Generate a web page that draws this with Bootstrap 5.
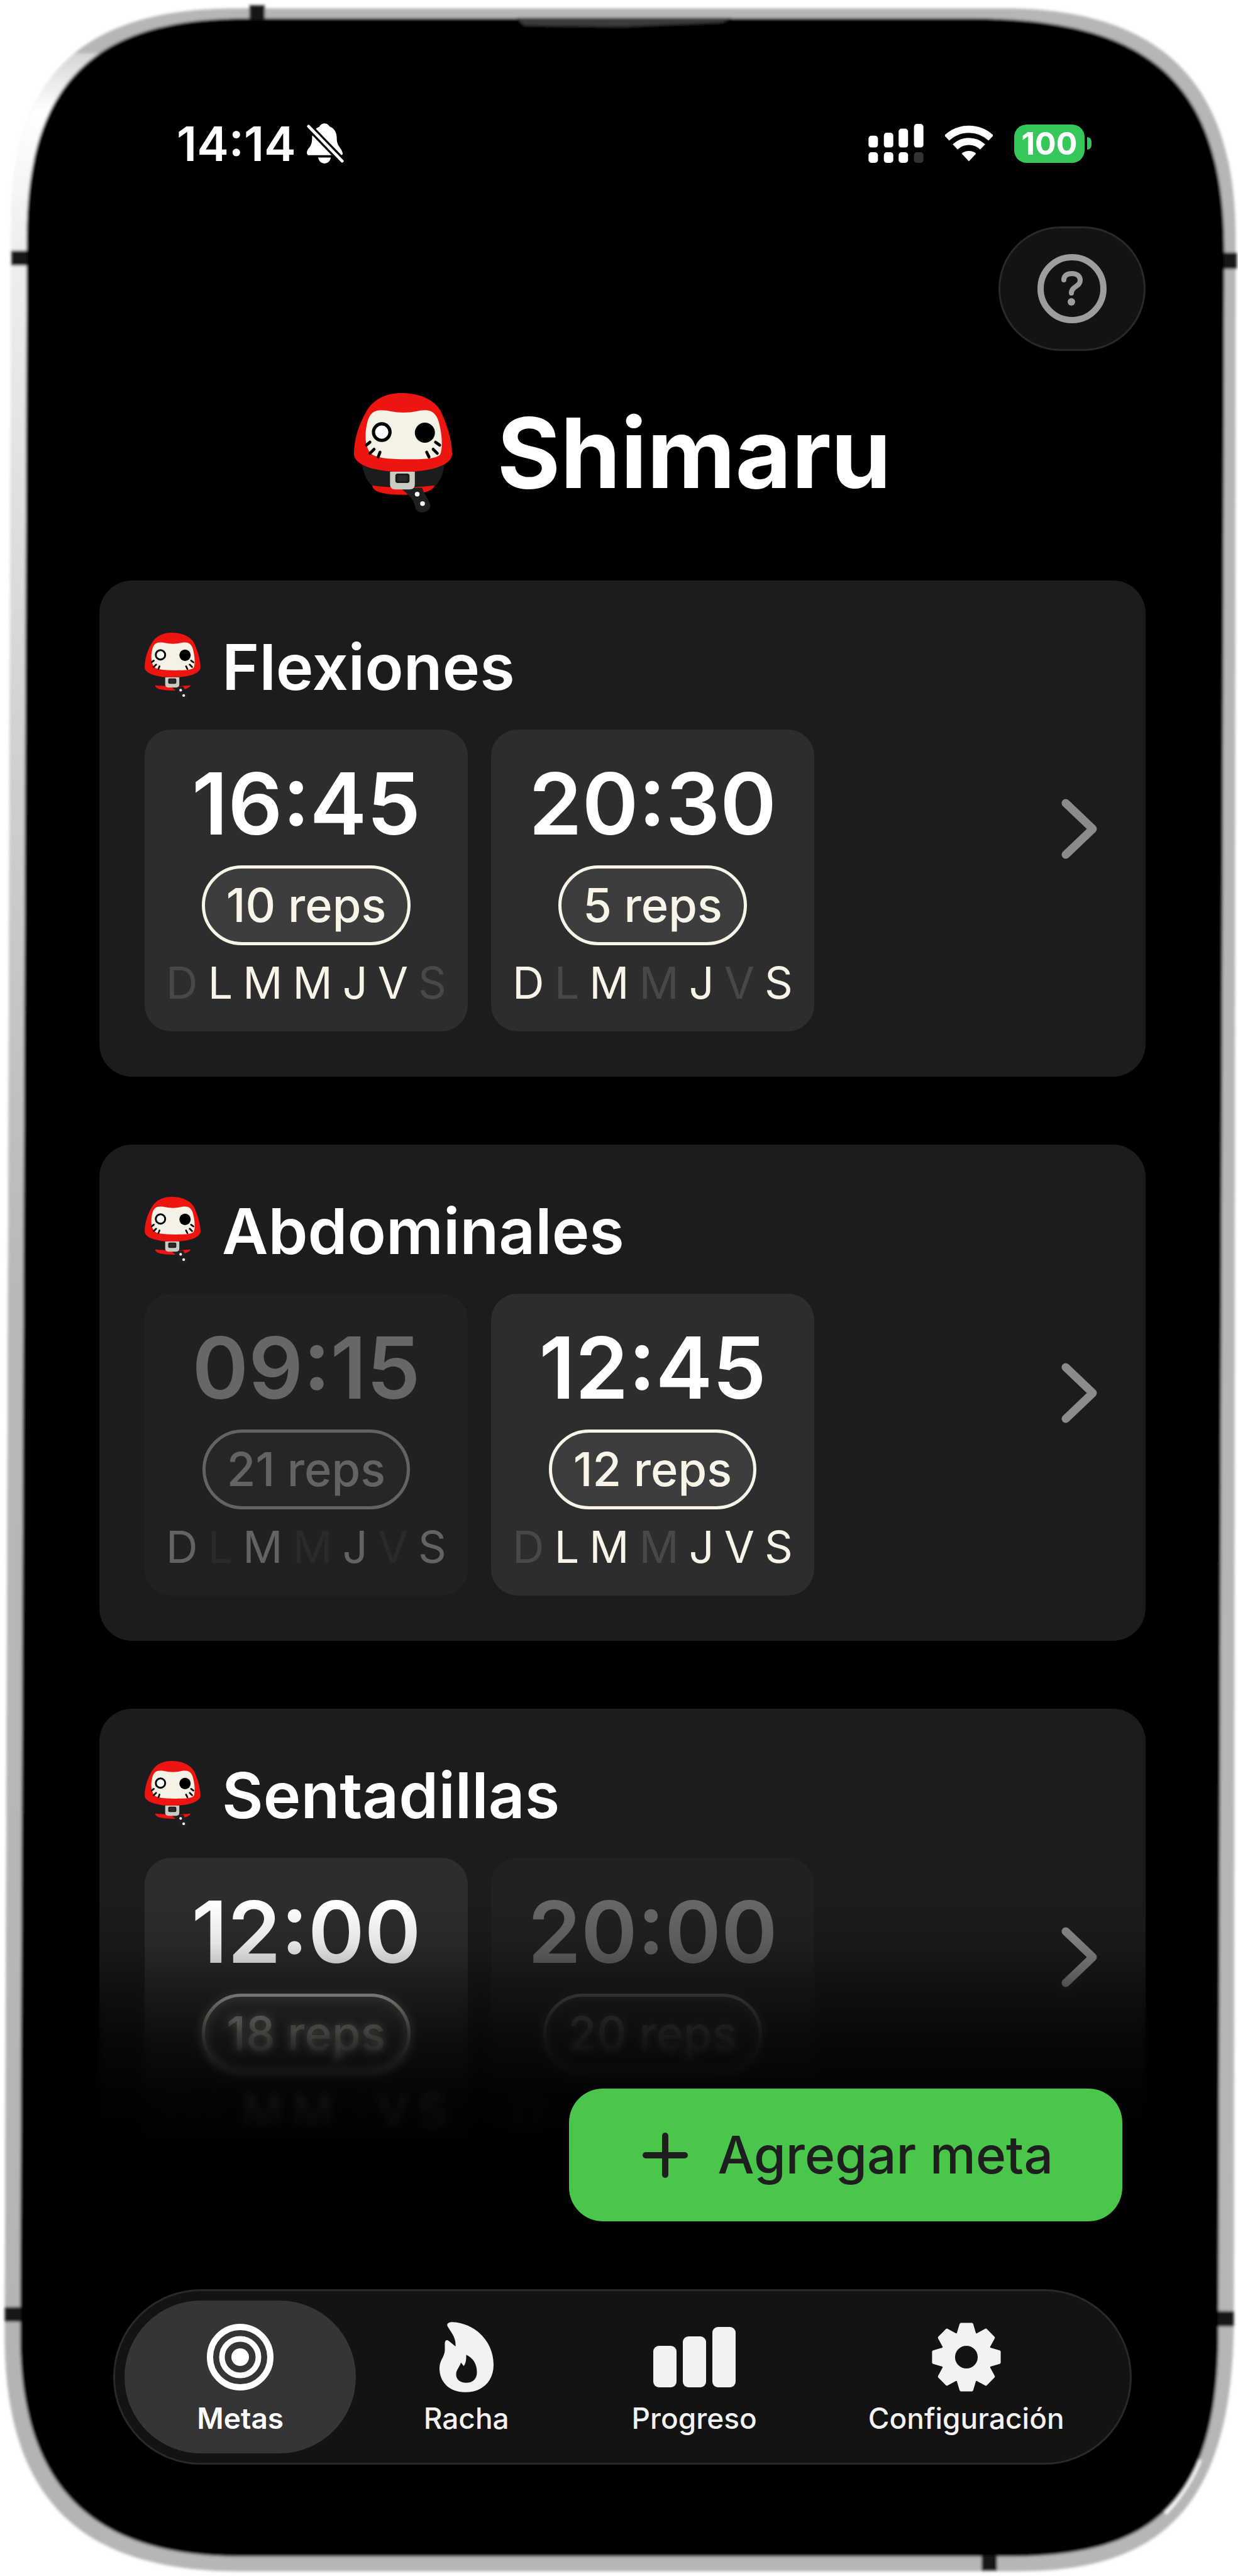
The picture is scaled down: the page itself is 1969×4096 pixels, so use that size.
<!DOCTYPE html>
<html lang="es">
<head>
  <meta charset="utf-8">
  <meta name="viewport" content="width=device-width, initial-scale=1">
  <title>Shimaru</title>
  <link href="https://cdn.jsdelivr.net/npm/bootstrap@5.3.3/dist/css/bootstrap.min.css" rel="stylesheet">
  <style>
    body {
      font-family: Inter, "Liberation Sans", sans-serif;
      background-color: #fff;
      color: #fff;
    }
    .phone-screen {
      padding: 180px 147px 176px 158px;
    }
    /* Status bar */
    .status-bar {
      height: 96px;
      padding: 0 86px 0 123px;
      font-size: 76px;
      line-height: 96px;
      font-weight: 600;
    }
    .wifi {
      margin: 0 34px;
    }
    .battery-level {
      width: 112px;
      height: 61px;
      border-radius: 20px;
      background-color: #35c759;
      font-size: 50px;
      line-height: 61px;
      font-weight: 700;
    }
    .battery-tip {
      width: 7px;
      height: 20px;
      border-radius: 0 8px 8px 0;
      background-color: #35c759;
    }
    /* Help button and brand */
    .help-btn {
      width: 234px;
      height: 198px;
      margin-top: 84px;
      border: 3px solid #292929;
      border-radius: 99px;
      background-color: #131313;
    }
    .brand {
      height: 200px;
      margin-top: 62px;
      gap: 72px;
    }
    .brand-name {
      font-size: 154px;
      line-height: 200px;
      font-weight: 700;
    }
    /* Goal cards */
    .goals {
      margin-top: 103px;
      gap: 108px;
    }
    .goal {
      padding: 72px;
      border-radius: 52px;
      background-color: #1c1c1e;
    }
    .goal-head {
      height: 129px;
      margin-bottom: 36px;
      gap: 34px;
    }
    .goal-name {
      font-size: 101px;
      line-height: 128px;
      font-weight: 600;
    }
    .alarms {
      gap: 37px;
    }
    .alarm {
      width: 514px;
      height: 480px;
      padding-top: 38px;
      gap: 18px;
      border-radius: 42px;
      background-color: #2d2d2d;
    }
    .alarm-off {
      opacity: .33;
    }
    .alarm-time {
      font-size: 136px;
      line-height: 160px;
      font-weight: 600;
    }
    .reps {
      padding: 0 34px;
      border: 5px solid #f8f4e8;
      border-radius: 64px;
      background-color: #3d3d3d;
      color: #f8f4e8;
      font-size: 74px;
      line-height: 117px;
      font-weight: 500;
    }
    .days {
      gap: 16px;
      color: #f8f4e8;
      font-size: 70px;
      line-height: 84px;
      font-weight: 400;
    }
    .day-off {
      color: #484848;
    }
    /* Fade over the end of the list */
    .fade-blur,
    .fade-dark {
      height: 480px;
      margin: 0 -20px;
      pointer-events: none;
    }
    .fade-blur {
      backdrop-filter: blur(7px);
      -webkit-mask-image: linear-gradient(transparent 22%, #000 52%);
      mask-image: linear-gradient(transparent 22%, #000 52%);
    }
    .fade-dark {
      background: linear-gradient(rgba(0, 0, 0, 0) 0, rgba(0, 0, 0, .1) 13%, rgba(0, 0, 0, .42) 30%, rgba(0, 0, 0, .68) 45%, rgba(0, 0, 0, .9) 64%, rgba(0, 0, 0, .98) 82%, #000 100%);
    }
    .add-btn {
      right: 37px;
      bottom: -26px;
      height: 211px;
      padding: 0 110px 0 117px;
      gap: 48px;
      border: 0;
      border-radius: 54px;
      background-color: #4ac64a;
      color: #1e1e1e;
      font-size: 82px;
      font-weight: 500;
    }
    /* Tab bar */
    .tab-dock {
      display: grid;
      grid-template-columns: 368fr 350fr 374fr 490fr;
      height: 279px;
      margin: 134px 22px 0 22px;
      padding: 15px;
      border: 3px solid #292929;
      border-radius: 140px;
      background-color: #131313;
    }
    .tab {
      padding-top: 34px;
      gap: 13px;
      border-radius: 122px;
      color: #f2f2f2;
      font-size: 46px;
      line-height: 56px;
      font-weight: 500;
    }
    .tab.active {
      background-color: #353535;
      color: #fff;
      font-weight: 600;
    }
  </style>
</head>
<body>
  <!-- Shared drawings -->
  <svg class="d-none">
    <symbol id="daruma" viewBox="0 0 166 202">
      <path fill="#1c1c1c" d="M12 115 C16 136 22 150 32 158 H137 C147 148 152 134 154 115Z"/>
      <path fill="#ee1511" d="M31 156 C50 160 110 160 136 156 C136 166 110 172 83 172 C55 172 31 168 31 156Z"/>
      <path fill="#ee1511" d="M80 0 C55 0 33 10 21 31 C10 50 0 75 0 103 C0 120 30 133 83 133 C136 133 166 120 166 103 C166 78 156 50 146 29 C134 10 110 0 80 0Z"/>
      <path fill="#f5f1e5" d="M46 29 C60 29 66 33 84 33 C102 33 108 29 120 29 C136 29 142 40 145 55 C149 72 150 90 147 101 C145 112 115 112 90 112 C60 112 33 110 27 100 C18 88 18 66 23 48 C27 34 34 29 46 29Z"/>
      <circle cx="47" cy="66" r="14" fill="#fff" stroke="#000" stroke-width="5.5"/>
      <circle cx="120" cy="67" r="17"/>
      <path stroke="#000" stroke-width="5" stroke-linecap="round" d="M27 83 L21 88 M34 95 L27 102 M44 100 L41 108 M138 83 L145 88 M134 95 L141 102 M123 100 L127 108"/>
      <path fill="#1f1f1f" d="M80 160 H115 C121 174 126 180 129 188 C131 204 106 206 104 194 C101 178 92 172 80 162Z"/>
      <path fill="#cbcac3" d="M61 133 H103 V154 C103 160 100 163 94 163 H70 C64 163 61 160 61 154Z"/>
      <rect x="70" y="136" width="24" height="16" rx="4" fill="#1c1c1c"/>
      <rect x="74" y="139" width="16" height="10" rx="2" fill="#2b2b2b"/>
      <circle cx="107" cy="171" r="4" fill="#fff"/>
      <circle cx="116" cy="187" r="4" fill="#fff"/>
    </symbol>
    <symbol id="chevron" viewBox="0 0 58 96">
      <path d="M7 7 L50 48 L7 89" fill="none" stroke="#8b8b8d" stroke-width="13" stroke-linecap="round" stroke-linejoin="round"/>
    </symbol>
  </svg>

  <div class="position-relative min-vh-100 overflow-hidden">
    <!-- Phone body -->
    <svg class="position-absolute top-0 start-0 w-100 h-100" viewBox="0 0 2090 4347" preserveAspectRatio="none" aria-hidden="true">
      <defs>
        <linearGradient id="shine" x1="0" x2="0" y1="0" y2="1">
          <stop offset="0" stop-color="#b4b4b4"/>
          <stop offset=".04" stop-color="#fff"/>
          <stop offset=".09" stop-color="#efefef"/>
          <stop offset=".3" stop-color="#cfcfcf"/>
          <stop offset=".5" stop-color="#b8b8b8"/>
          <stop offset="1" stop-color="#b4b4b4"/>
        </linearGradient>
        <filter id="soft" x="-1%" y="-1%" width="102%" height="102%"><feGaussianBlur stdDeviation="2"/></filter>
        <clipPath id="leftSide"><path d="M0 90 H170 V4347 H0Z"/></clipPath>
      </defs>
      <g filter="url(#soft)">
        <path fill="#b6b6b6" d="M400 14 H1700 C1950 16 2086 130 2086 400 L2083 3920 C2080 4230 1960 4339 1720 4339 H400 C130 4338 8 4210 8 3940 L19 380 C19 100 170 14 400 14Z"/>
        <path fill="url(#shine)" clip-path="url(#leftSide)" d="M400 14 H1700 C1950 16 2086 130 2086 400 L2083 3920 C2080 4230 1960 4339 1720 4339 H400 C130 4338 8 4210 8 3940 L19 380 C19 100 170 14 400 14Z"/>
        <path fill="none" stroke="#fff" stroke-width="10" d="M2024 4150 C2010 4186 1990 4214 1966 4240"/>
        <path fill="#040404" d="M420 31 H1650 C1930 34 2066 130 2067 420 L2057 3940 C2056 4240 1930 4314 1700 4314 H400 C150 4312 34 4190 34 3940 L45 400 C45 120 180 30 420 31Z"/>
        <path fill="#3a3a3a" d="M872 30 H1235 L1220 38 L1050 45 L885 43Z"/>
        <path fill="#161616" d="M421 9 H447 V34 H421Z M19 423 H46 V448 H19Z M2066 426 H2088 V454 H2066Z M8 3893 H36 V3918 H8Z M2056 3900 H2083 V3926 H2056Z M1657 4312 H1683 V4338 H1657Z"/>
      </g>
      <rect x="84" y="70" width="1936" height="4195" rx="230"/>
    </svg>

    <div class="phone-screen position-relative d-flex flex-column">
      <!-- Status bar -->
      <div class="status-bar d-flex align-items-center">
        <span>14:14</span>
        <svg class="ms-3 me-auto" width="60" height="64" viewBox="0 0 64 68" aria-label="Silencio" role="img">
          <path fill="#fff" d="M31 0 C37 0 38 4 41 6 C50 10 52 18 52 28 C52 38 62 44 62 52 L60 54 H3 C-1 50 2 44 6 40 C10 35 10 28 10 22 C12 12 17 8 22 6 C24 3 26 0 31 0Z M20 58 H42 C40 65 36 68 31 68 C26 68 22 65 20 58Z"/>
          <path stroke="#000" stroke-width="12" d="M0 1 L64 67"/>
          <path stroke="#fff" stroke-width="5" stroke-linecap="round" d="M4 5 L61 64"/>
        </svg>
        <svg width="88" height="62" viewBox="0 0 93 66" aria-label="Cobertura" role="img">
          <g fill="#fff">
            <rect x="0" y="20" width="16" height="20" rx="5"/>
            <rect x="26" y="15" width="16" height="25" rx="5"/>
            <rect x="51" y="8" width="16" height="32" rx="5"/>
            <rect x="77" y="0" width="16" height="40" rx="5"/>
            <rect x="0" y="48" width="16" height="18" rx="5"/>
            <rect x="26" y="48" width="16" height="18" rx="5"/>
            <rect x="51" y="48" width="16" height="18" rx="5"/>
          </g>
          <rect x="77" y="48" width="16" height="18" rx="5" fill="#333"/>
        </svg>
        <svg class="wifi" width="76" height="58" viewBox="0 0 80 60" aria-label="Wi-Fi" role="img">
          <g fill="none" stroke="#fff" stroke-width="12">
            <path d="M3 21 A54 54 0 0 1 77 21"/>
            <path d="M17 36 A33 33 0 0 1 63 36"/>
          </g>
          <path fill="#fff" d="M40 60 L28 47 A19 19 0 0 1 52 47Z"/>
        </svg>
        <span class="battery-level text-center">100</span>
        <span class="battery-tip ms-1"></span>
      </div>

      <button type="button" class="help-btn align-self-end p-0 d-flex align-items-center justify-content-center" aria-label="Ayuda">
        <svg width="110" height="110" viewBox="0 0 110 110">
          <g fill="none" stroke="#9d9d9d" stroke-linecap="round" stroke-linejoin="round">
            <circle cx="55" cy="55" r="50" stroke-width="10"/>
            <path stroke-width="8" d="M42 41 C42 34 47 31 55 31 C63 31 68 35 68 42 C68 52 54 51 54 62"/>
          </g>
          <circle cx="54" cy="76" r="6" fill="#9d9d9d"/>
        </svg>
      </button>

      <div class="brand d-flex align-items-center justify-content-center">
        <svg width="156" height="190"><use href="#daruma"/></svg>
        <h1 class="brand-name m-0">Shimaru</h1>
      </div>

      <!-- Goals -->
      <main class="goals position-relative d-flex flex-column">
        <div id="goalList"></div>
        <div class="fade-blur position-absolute bottom-0 start-0 end-0"></div>
        <div class="fade-dark position-absolute bottom-0 start-0 end-0"></div>
        <button type="button" class="add-btn position-absolute d-flex align-items-center">
          <svg width="72" height="72" viewBox="0 0 72 72">
            <path d="M36 5 V67 M5 36 H67" stroke="#1e1e1e" stroke-width="10" stroke-linecap="round"/>
          </svg>
          Agregar meta
        </button>
      </main>

      <!-- Tabs -->
      <nav class="tab-dock">
        <a href="#metas" class="tab active d-flex flex-column align-items-center text-decoration-none">
          <svg width="106" height="112" viewBox="0 0 106 112">
            <g fill="none" stroke="#fff">
              <circle cx="53" cy="56" r="48" stroke-width="10"/>
              <circle cx="53" cy="56" r="29" stroke-width="9"/>
            </g>
            <circle cx="53" cy="56" r="14" fill="#fff"/>
          </svg>
          Metas
        </a>
        <a href="#racha" class="tab d-flex flex-column align-items-center text-decoration-none">
          <svg width="86" height="112" viewBox="0 0 91 118">
            <path fill="#f2f2f2" fill-rule="evenodd" d="M22 0 C60 2 91 32 91 72 C91 100 72 118 43 118 C16 118 0 100 0 78 C0 64 8 60 9 48 V36 C9 30 13 29 16 32 L27 41 C28 26 20 18 14 8 C11 3 15 0 22 0Z M45 55 C45 62 45 68 41 74 L36 68 C34 76 28 80 28 88 C28 96 34 102 45 102 C56 102 63 96 63 84 C63 70 56 60 45 55Z"/>
          </svg>
          Racha
        </a>
        <a href="#progreso" class="tab d-flex flex-column align-items-center text-decoration-none">
          <svg width="131" height="112" viewBox="0 0 131 112">
            <g fill="#f2f2f2">
              <rect x="0" y="38" width="37" height="66" rx="9"/>
              <rect x="47" y="23" width="37" height="81" rx="9"/>
              <rect x="94" y="8" width="37" height="96" rx="9"/>
            </g>
          </svg>
          Progreso
        </a>
        <a href="#configuracion" class="tab d-flex flex-column align-items-center text-decoration-none">
          <svg width="112" height="112" viewBox="-59 -59 118 118">
            <circle r="31" fill="none" stroke="#f2f2f2" stroke-width="24"/>
            <g fill="#f2f2f2" stroke="#f2f2f2" stroke-width="5" stroke-linejoin="round">
              <path id="tooth" d="M-14 -38 L-9 -55 H9 L14 -38Z"/>
              <use href="#tooth" transform="rotate(45)"/>
              <use href="#tooth" transform="rotate(90)"/>
              <use href="#tooth" transform="rotate(135)"/>
              <use href="#tooth" transform="rotate(180)"/>
              <use href="#tooth" transform="rotate(225)"/>
              <use href="#tooth" transform="rotate(270)"/>
              <use href="#tooth" transform="rotate(315)"/>
            </g>
          </svg>
          Configuración
        </a>
      </nav>
    </div>
  </div>

  <script src="https://cdn.jsdelivr.net/npm/bootstrap@5.3.3/dist/js/bootstrap.bundle.min.js"></script>
  <script>
    const dayNames = ['D', 'L', 'M', 'M', 'J', 'V', 'S'];

    // days: one flag for each day, Sunday first
    const goals = [
      { name: 'Flexiones', alarms: [
        { time: '16:45', reps: 10, days: '0111110', on: true },
        { time: '20:30', reps: 5, days: '1010101', on: true }
      ] },
      { name: 'Abdominales', alarms: [
        { time: '09:15', reps: 21, days: '1010101', on: false },
        { time: '12:45', reps: 12, days: '0110111', on: true }
      ] },
      { name: 'Sentadillas', alarms: [
        { time: '12:00', reps: 18, days: '0011011', on: true },
        { time: '20:00', reps: 20, days: '1000001', on: false }
      ] }
    ];

    function alarmHtml({ time, reps, days, on }) {
      const letters = dayNames.map((d, i) => `<span class="${days[i] === '1' ? '' : 'day-off'}">${d}</span>`).join('');
      return `
        <div class="alarm ${on ? '' : 'alarm-off'} d-flex flex-column align-items-center">
          <div class="alarm-time">${time}</div>
          <div class="reps">${reps} reps</div>
          <div class="days d-flex">${letters}</div>
        </div>`;
    }

    // Draw one card for each goal, before the fade
    document.getElementById('goalList').outerHTML = goals.map(({ name, alarms }) => `
      <section class="goal d-flex align-items-center justify-content-between">
        <div>
          <div class="goal-head d-flex align-items-center">
            <svg width="89" height="108"><use href="#daruma"/></svg>
            <h2 class="goal-name m-0">${name}</h2>
          </div>
          <div class="alarms d-flex">${alarms.map(alarmHtml).join('')}</div>
        </div>
        <button type="button" class="btn p-0 me-1 border-0 lh-1" aria-label="Abrir ${name}">
          <svg width="58" height="96"><use href="#chevron"/></svg>
        </button>
      </section>`).join('');
  </script>
</body>
</html>
